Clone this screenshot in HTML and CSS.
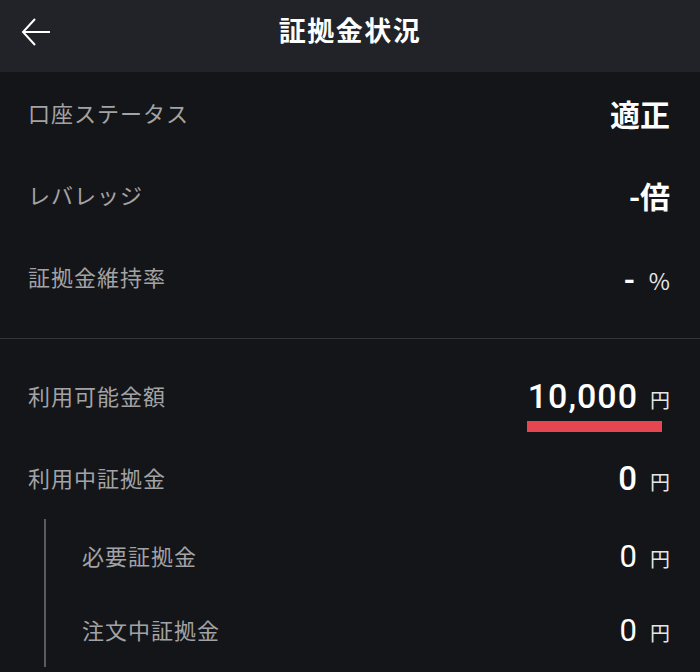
FILE: index.html
```html
<!DOCTYPE html>
<html lang="ja">
<head>
<meta charset="utf-8">
<link rel="stylesheet" href="styles.css">
</head>
<body>
<header class="topbar">
  <button class="back" aria-label="戻る">
    <svg width="30" height="30" viewBox="0 0 30 30"><path d="M29 15H2M14 2L2 15l12 13" fill="none" stroke="#fff" stroke-width="2"/></svg>
  </button>
  <h1 class="title">証拠金状況</h1>
</header>
<main>
  <section class="group first">
    <div class="row"><span class="label">口座ステータス</span><span class="value strong">適正</span></div>
    <div class="row"><span class="label">レバレッジ</span><span class="value strong">-倍</span></div>
    <div class="row"><span class="label">証拠金維持率</span><span class="value"><b class="dash">-</b><span class="unit pct">%</span></span></div>
  </section>
  <section class="group second">
    <div class="row"><span class="label">利用可能金額</span><span class="value amount marked"><span class="num">10,000</span><span class="unit">円</span></span></div>
    <div class="row"><span class="label">利用中証拠金</span><span class="value amount"><span class="num bold">0</span><span class="unit">円</span></span></div>
    <div class="sub">
      <div class="row subrow"><span class="label">必要証拠金</span><span class="value amount"><span class="num small">0</span><span class="unit">円</span></span></div>
      <div class="row subrow"><span class="label">注文中証拠金</span><span class="value amount"><span class="num small">0</span><span class="unit">円</span></span></div>
    </div>
  </section>
</main>
</body>
</html>
```
FILE: styles.css
```css
* { box-sizing: border-box; }
html, body { margin: 0; padding: 0; }
body {
  background: #141518;
  color: #fff;
  font-family: "Noto Sans CJK JP", "Noto Sans", sans-serif;
  width: 700px;
  height: 672px;
  overflow: hidden;
}
.topbar {
  height: 72px;
  background: #212328;
  display: flex;
  align-items: center;
  justify-content: center;
  position: relative;
}
.back {
  position: absolute;
  left: 21px;
  top: 17px;
  background: none;
  border: 0;
  padding: 0;
  width: 30px;
  height: 30px;
  display: flex;
}
.title {
  margin: 0;
  font-size: 27px;
  font-weight: 700;
  letter-spacing: 1.5px;
  margin-top: -14px;
}
.group { padding: 0 30px 0 28px; }
.first { padding-bottom: 20px; border-bottom: 1px solid #34353a; }
.second { padding-top: 16px; }
.row {
  height: 82px;
  display: flex;
  align-items: center;
  justify-content: space-between;
}
.label {
  color: #a3a3a6;
  font-size: 22px;
  letter-spacing: 1px;
  margin-top: -3px;
}
.value {
  display: flex;
  align-items: baseline;
  color: #fff;
}
.strong { font-size: 30px; font-weight: 700; }
.dash { font-size: 30px; font-weight: 700; }
.unit { font-size: 20px; color: #e6e6e6; margin-left: 12px; font-family: "Noto Sans CJK JP", sans-serif; font-weight: 400; }
.pct { font-size: 23px; margin-left: 14px; }
.num { font-family: Roboto, "Liberation Sans", sans-serif; font-size: 34px; font-weight: 500; letter-spacing: 1px; }
.num.bold { font-weight: 500; font-size: 33px; }
.num.small { font-size: 31px; font-weight: 400; }
.marked { position: relative; }
.marked::after {
  content: "";
  position: absolute;
  left: -1px;
  right: 8px;
  bottom: -16px;
  height: 11px;
  background: #e5464f;
}
.sub {
  margin-left: 16px;
  border-left: 2px solid #5a5b5f;
}
.subrow { height: 74px; padding-left: 36px; }
```
